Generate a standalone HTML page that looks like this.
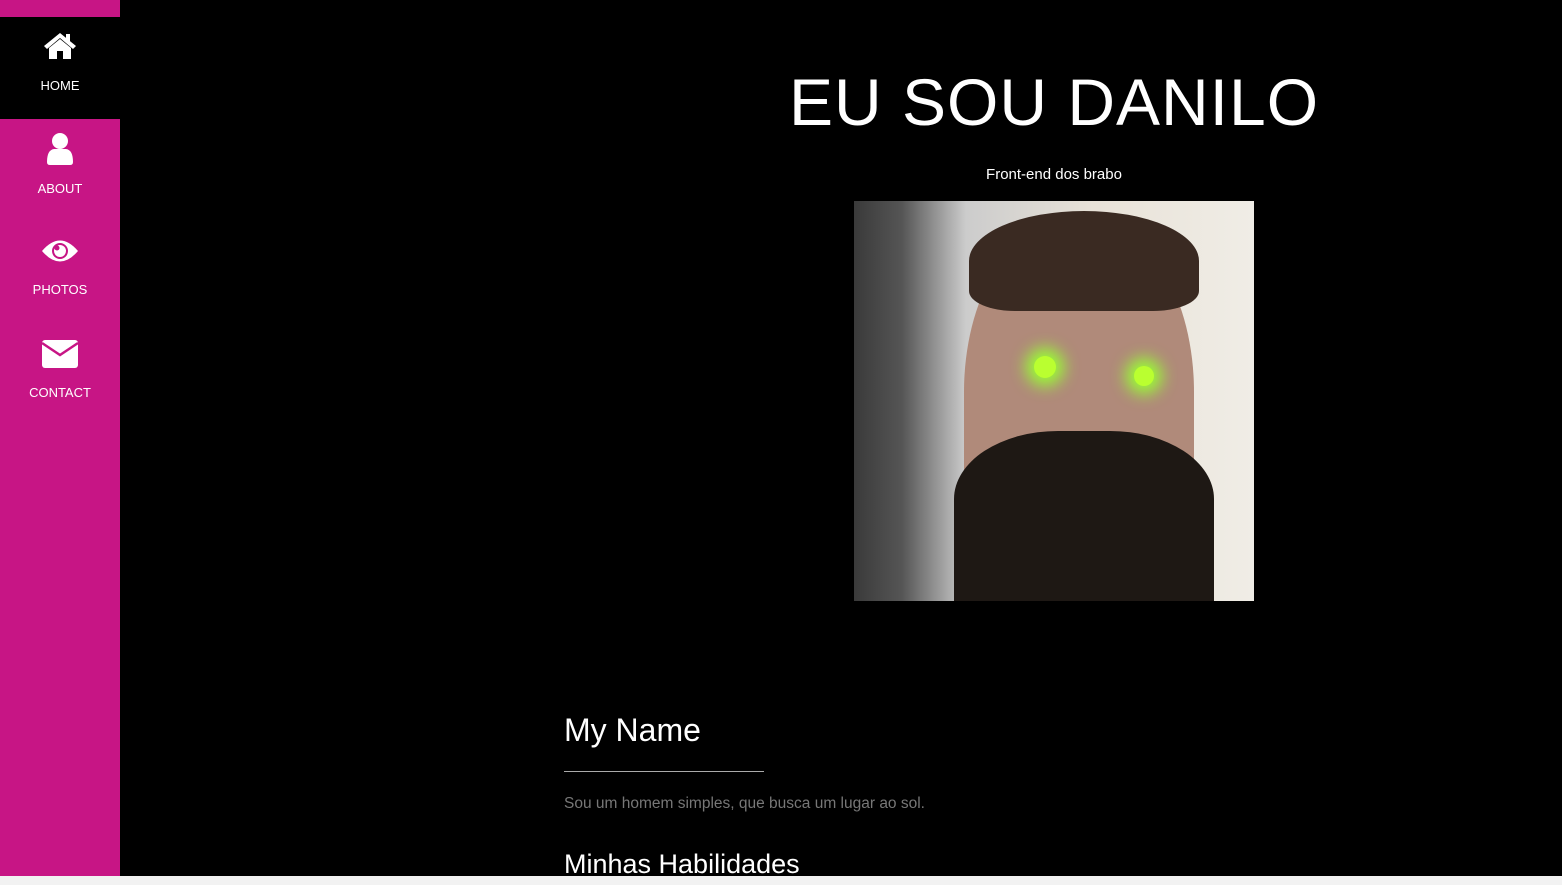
<!DOCTYPE html>
<html><head><meta charset="utf-8"><style>
*{margin:0;padding:0;box-sizing:border-box}
body{width:1562px;height:885px;background:#000;overflow:hidden;position:relative;font-family:"Liberation Sans",sans-serif;color:#fff}
.side{position:absolute;left:0;top:0;width:120px;height:876px;background:#c71585}
.item{position:absolute;left:0;width:120px;height:102px;text-align:center;font-size:13px;color:#fff}
.item svg{display:block;margin:0 auto}
.home{top:17px;background:#000}
.bottom{position:absolute;left:0;top:876px;width:1562px;height:9px;background:#f2f2f2}
</style></head><body>
<div class="side">
 <div class="item home"><svg width="36" height="30" viewBox="0 0 34 30" style="margin-top:14px"><path d="M17 2 L1 15 L4 18 L17 7 L30 18 L33 15 Z" fill="#fff"/><rect x="23" y="3" width="4" height="8" fill="#fff"/><path d="M6 17 L17 8 L28 17 L28 28 L20 28 L20 20 L14 20 L14 28 L6 28 Z" fill="#fff"/></svg><div style="margin-top:17px">HOME</div></div>
 <div class="item" style="top:119px"><svg width="28" height="34" viewBox="0 0 28 34" style="margin-top:13px"><circle cx="14" cy="9" r="8" fill="#fff"/><path d="M1 30 Q1 18 8 17 L20 17 Q27 18 27 30 Q27 33 24 33 L4 33 Q1 33 1 30Z" fill="#fff"/></svg><div style="margin-top:15px">ABOUT</div></div>
 <div class="item" style="top:221px"><svg width="38" height="26" viewBox="0 0 38 26" style="margin-top:17px"><path d="M1 13 Q19 -8 37 13 Q19 34 1 13Z" fill="#fff"/><circle cx="19" cy="13" r="8" fill="#c71585"/><circle cx="19" cy="13" r="6" fill="#fff"/><circle cx="16" cy="10" r="2.5" fill="#c71585"/></svg><div style="margin-top:18px">PHOTOS</div></div>
 <div class="item" style="top:323px"><svg width="38" height="30" viewBox="0 0 38 30" style="margin-top:16px"><rect x="1" y="1" width="36" height="28" rx="3" fill="#fff"/><path d="M1 4 L19 16 L37 4" stroke="#c71585" stroke-width="2.5" fill="none"/></svg><div style="margin-top:16px">CONTACT</div></div>
</div>
<div style="position:absolute;left:654px;width:800px;top:66px;text-align:center;font-size:66px;line-height:72px;letter-spacing:1px;white-space:nowrap">EU SOU DANILO</div>
<div style="position:absolute;left:854px;width:400px;top:166px;text-align:center;font-size:15px">Front-end dos brabo</div>
<div style="position:absolute;left:854px;top:201px;width:400px;height:400px;background:linear-gradient(90deg,#3a3a3a 0%,#555 12%,#ccc 28%,#e8e2d8 60%,#f0ede6 100%);overflow:hidden">
 <div style="position:absolute;left:110px;top:20px;width:230px;height:380px;border-radius:45% 45% 20% 20%;background:#b08a7a"></div>
 <div style="position:absolute;left:115px;top:10px;width:230px;height:100px;border-radius:50% 50% 20% 20%;background:#3a2a22"></div>
 <div style="position:absolute;left:100px;top:230px;width:260px;height:170px;border-radius:40% 40% 0 0;background:#1e1814"></div>
 <div style="position:absolute;left:180px;top:155px;width:22px;height:22px;border-radius:50%;background:#baff30;box-shadow:0 0 16px 8px #9f3"></div>
 <div style="position:absolute;left:280px;top:165px;width:20px;height:20px;border-radius:50%;background:#baff30;box-shadow:0 0 16px 8px #9f3"></div>
</div>
<div style="position:absolute;left:564px;top:710px;font-size:32px;line-height:40px">My Name</div>
<div style="position:absolute;left:564px;top:771px;width:200px;height:1px;background:#aaa"></div>
<div style="position:absolute;left:564px;top:795px;font-size:15.5px;color:#777">Sou um homem simples, que busca um lugar ao sol.</div>
<div style="position:absolute;left:564px;top:847px;font-size:27px;line-height:34px">Minhas Habilidades</div>
<div class="bottom"></div>
</body></html>
